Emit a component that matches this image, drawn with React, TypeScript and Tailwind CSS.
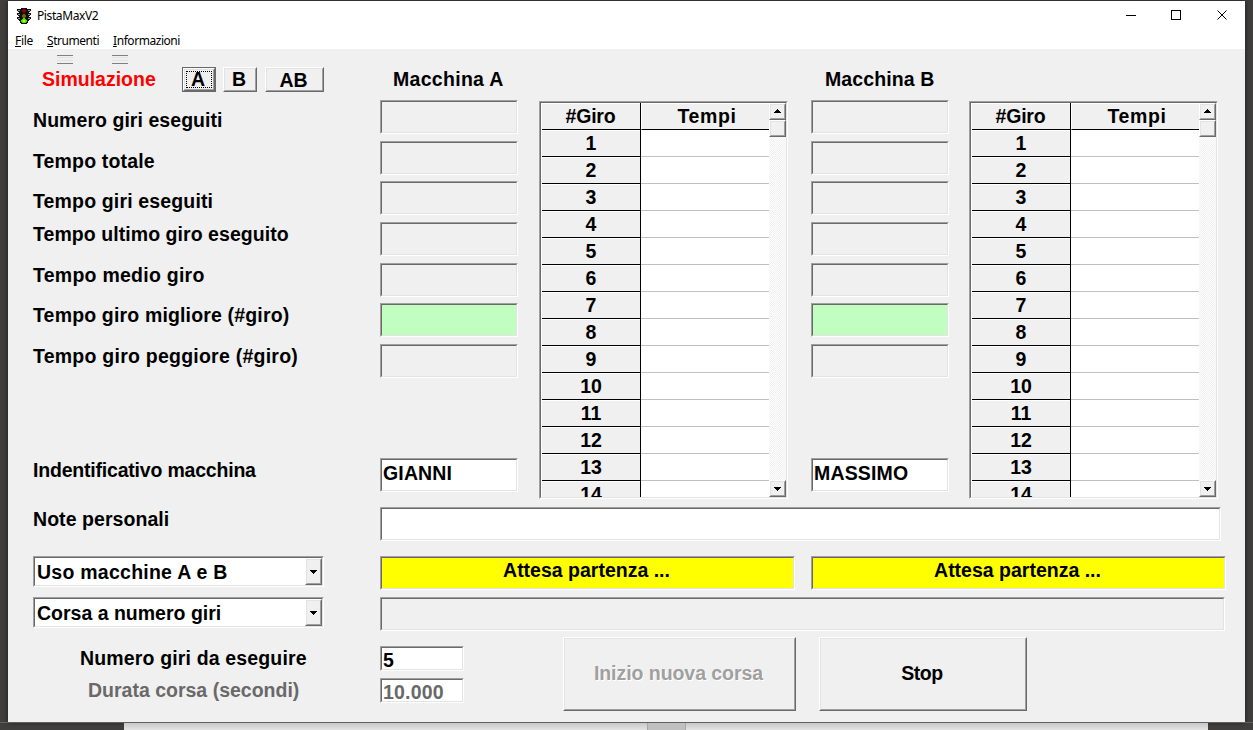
import React from "react";

const SUNKEN =
  "box-border border border-t-[#a0a0a0] border-l-[#a0a0a0] border-r-white border-b-white";
const SUNKEN_IN =
  "h-full w-full border border-t-[#696969] border-l-[#696969] border-r-[#e3e3e3] border-b-[#e3e3e3] overflow-hidden";

function Sunken({ size, fill = "", children }: { size: string; fill?: string; children?: React.ReactNode }) {
  return (
    <div className={`${SUNKEN} shrink-0 ${size}`}>
      <div className={`${SUNKEN_IN} ${fill}`}>{children}</div>
    </div>
  );
}

function Raised({ size, className = "", children }: { size: string; className?: string; children?: React.ReactNode }) {
  return (
    <div className={`shrink-0 border border-t-white border-l-white border-r-[#696969] border-b-[#696969] bg-[#f0f0f0] ${size}`}>
      <div className={`flex h-full w-full items-center justify-center border border-t-[#e3e3e3] border-l-[#e3e3e3] border-r-[#a0a0a0] border-b-[#a0a0a0] ${className}`}>
        {children}
      </div>
    </div>
  );
}

function ScrollButton({ up }: { up?: boolean }) {
  return (
    <Raised size="h-[17px] w-[17px]" className={up ? "pb-px" : ""}>
      <svg width="7" height="4" viewBox="0 0 7 4" shapeRendering="crispEdges">
        <path d={up ? "M3 0h1v1h1v1h1v1h1v1H0V3h1V2h1V1h1z" : "M0 0h7v1H6v1H5v1H4v1H3V3H2V2H1V1H0z"} />
      </svg>
    </Raised>
  );
}

function LapTable() {
  const laps = Array.from({ length: 14 }, (_, i) => i + 1);
  return (
    <Sunken size="h-[398px] w-[249px]">
      <div className="flex h-full w-full bg-white">
        <div className="w-[100px] shrink-0 border-r border-l border-r-black border-l-white bg-[#f0f0f0]">
          <div className="h-[27px] border-t border-b border-t-white border-b-black pr-px text-center leading-[25px] tracking-[-0.2px]">#Giro</div>
          {laps.map((n) => (
            <div key={n} className="h-[27px] border-t border-b border-t-white border-b-black text-center leading-[25px]">
              {n}
            </div>
          ))}
        </div>
        <div className="w-[128px] shrink-0">
          <div className="h-[27px] border-t border-b border-l border-t-white border-l-white border-b-black bg-[#f0f0f0] pl-[3px] text-center leading-[25px] tracking-[0.6px]">Tempi</div>
          {laps.map((n) => (
            <div key={n} className="h-[27px] border-b border-[#c0c0c0]" />
          ))}
        </div>
        <div className="flex w-[17px] shrink-0 flex-col bg-[repeating-conic-gradient(#f0f0f0_0_25%,#ffffff_0_50%)] bg-[length:2px_2px]">
          <ScrollButton up />
          <Raised size="h-[17px] w-[17px]" />
          <div className="flex-1" />
          <ScrollButton />
        </div>
      </div>
    </Sunken>
  );
}

function CarPanel({ title, name, titleClass, fieldsWidth }: { title: string; name: string; titleClass: string; fieldsWidth: string }) {
  const field = "h-[34px] w-[138px]";
  return (
    <div className="flex">
      <div className={`shrink-0 ${fieldsWidth}`}>
        <div className={`h-[33px] pt-px leading-[22px] whitespace-nowrap ${titleClass}`}>{title}</div>
        <div className="flex h-[358px] flex-col">
          <Sunken size={field} />
          <div className="h-[7px]" />
          <Sunken size={field} />
          <div className="h-[6px]" />
          <Sunken size={field} />
          <div className="h-[7px]" />
          <Sunken size={field} />
          <div className="h-[7px]" />
          <Sunken size={field} />
          <div className="h-[6px]" />
          <Sunken size={field} fill="bg-[#c0ffc0]" />
          <div className="h-[7px]" />
          <Sunken size={field} />
        </div>
        <Sunken size={field} fill="bg-white">
          <div className="pl-[1px] leading-[27px] tracking-[0.15px]">{name}</div>
        </Sunken>
      </div>
      <div className="pt-[34px]">
        <LapTable />
      </div>
    </div>
  );
}

function Combo({ label, spacing }: { label: string; spacing: string }) {
  return (
    <Sunken size="h-[31px] w-[291px]" fill="bg-white">
      <div className="flex h-full">
        <div className={`flex-1 pl-[2px] leading-[29px] ${spacing}`}>{label}</div>
        <Raised size="h-[27px] w-[17px]">
          <svg width="7" height="4" viewBox="0 0 7 4" shapeRendering="crispEdges">
            <path d="M0 0h7v1H6v1H5v1H4v1H3V3H2V2H1V1H0z" />
          </svg>
        </Raised>
      </div>
    </Sunken>
  );
}

function TrafficLight() {
  return (
    <svg width="16" height="16" viewBox="0 0 16 16" shapeRendering="crispEdges">
      <path d="M5 0h6v1h4v2h-1v1h-1v1h2v2h-1v1h-1v1h2v2h-1v1h-1v1h-1v2h-1v1H5v-1H4v-2H3v-1H2v-1H1V9h2V8H2V7H1V5h2V4H2V3H1V1h4z" fill="#111" />
      <path d="M2 2h2v1H2zM12 2h2v1h-2zM2 6h2v1H2zM12 6h2v1h-2zM2 10h2v1H2zM12 10h2v1h-2z" fill="#909090" />
      <path d="M7 1h2v1h1v2H9v1H7V4H6V2h1z" fill="#8b0000" />
      <path d="M7 6h2v1h1v2H9v1H7V9H6V7h1z" fill="#6b6b00" />
      <path d="M7 10h2v1h1v1h1v2h-1v1H6v-1H5v-2h1v-1h1z" fill="#39f000" />
      <path d="M7 12h2v2H7z" fill="#ffff00" />
    </svg>
  );
}

function Gripper() {
  return (
    <div className="h-[9px] w-4 border-t border-b border-[#808080] pt-px">
      <div className="h-[4px] border-t border-b border-[#e3e3e3]" />
    </div>
  );
}

const LABELS = [
  { text: "Numero giri eseguiti", h: "h-[41px]", sp: "tracking-[0.05px]" },
  { text: "Tempo totale", h: "h-[40px]", sp: "tracking-[0.15px]" },
  { text: "Tempo giri eseguiti", h: "h-[33px]", sp: "tracking-[0.15px]" },
  { text: "Tempo ultimo giro eseguito", h: "h-[41px]", sp: "tracking-[0.06px]" },
  { text: "Tempo medio giro", h: "h-[40px]", sp: "tracking-[0.25px]" },
  { text: "Tempo giro migliore (#giro)", h: "h-[41px]", sp: "tracking-[0.16px]" },
  { text: "Tempo giro peggiore (#giro)", h: "h-[114px]", sp: "tracking-[0.24px]" },
  { text: "Indentificativo macchina", h: "h-[49px]", sp: "tracking-[-0.2px]" },
  { text: "Note personali", h: "h-[30px]", sp: "tracking-[0.06px]" },
];

export default function App() {
  return (
    <div className="flex h-[730px] w-[1253px] flex-col overflow-hidden bg-[#403f3d] pt-px">
      <div className="ml-2 flex h-[721px] w-[1237px] shrink-0 flex-col bg-[#f0f0f0] shadow-[0_0_5px_rgba(0,0,0,0.6)]">
        <div className="h-[48px] shrink-0 bg-white font-['Noto_Sans',sans-serif] text-xs text-black">
          <div className="flex h-[30px] items-center pl-2">
            <TrafficLight />
            <span className="ml-[5px] tracking-[-0.4px]">PistaMaxV2</span>
            <div className="flex-1" />
            <svg width="102" height="12" viewBox="0 0 102 12" className="mr-[17px]" fill="none" stroke="#000" shapeRendering="crispEdges">
              <path d="M0 5.5h10M45.5 0.5h9v9h-9z" />
              <path d="M91.5 0.5l9 9M100.5 0.5l-9 9" shapeRendering="auto" />
            </svg>
          </div>
          <div className="flex h-[18px] gap-[14px] pl-[7px] leading-[20px]">
            <span className="tracking-[-0.3px]"><u>F</u>ile</span>
            <span className="tracking-[-0.45px]"><u>S</u>trumenti</span>
            <span className="tracking-[-0.45px]"><u>I</u>nformazioni</span>
          </div>
        </div>
        <div className="flex h-[673px] flex-col font-['Liberation_Sans',Arial,sans-serif] text-[19.5px] font-bold text-black">
          <div className="flex h-[18px] shrink-0 gap-[39px] pt-[6px] pl-[49px]">
            <Gripper />
            <Gripper />
          </div>
          <div className="flex h-[489px] shrink-0">
            <div className="w-[372px] shrink-0">
              <div className="flex h-[41px] pl-[34px]">
                <div className="w-[140px] pt-[2px] leading-[20px] text-[#ff0000]">Simulazione</div>
                <div className="h-[25px] w-[34px] border border-[#696969]">
                  <Raised size="h-full w-full" className="p-px">
                    <div className="flex h-full w-full items-center justify-center border border-dotted border-black pr-[2px]">A</div>
                  </Raised>
                </div>
                <div className="w-[7px]" />
                <Raised size="h-[25px] w-[34px]" className="pr-[2px]">B</Raised>
                <div className="w-[8px]" />
                <Raised size="h-[25px] w-[59px]" className="pt-[2px] pr-[2px]">AB</Raised>
              </div>
              <div className="pl-[25px] leading-[24px] whitespace-nowrap">
                {LABELS.map((l) => (
                  <div key={l.text} className={`${l.h} ${l.sp}`}>{l.text}</div>
                ))}
              </div>
            </div>
            <div>
              <div className="flex h-[440px]">
                <div className="w-[431px]">
                  <CarPanel title="Macchina A" name="GIANNI" titleClass="pl-[13px] tracking-[0.3px]" fieldsWidth="w-[159px]" />
                </div>
                <CarPanel title="Macchina B" name="MASSIMO" titleClass="pl-[14px] tracking-[0.1px]" fieldsWidth="w-[158px]" />
              </div>
              <Sunken size="h-[34px] w-[841px]" fill="bg-white" />
            </div>
          </div>
          <div className="flex">
            <div className="w-[347px] pl-[25px]">
              <Combo label="Uso macchine A e B" spacing="tracking-[0.25px]" />
              <div className="h-[10px]" />
              <Combo label="Corsa a numero giri" spacing="" />
              <div className="h-[18px]" />
              <div className="pl-[47px] leading-[24px] tracking-[0.15px] whitespace-nowrap">Numero giri da eseguire</div>
              <div className="mt-[8px] pl-[55px] leading-[24px] whitespace-nowrap text-[#696969]">Durata corsa (secondi)</div>
            </div>
            <div className="ml-[25px]">
              <div className="flex gap-[16px]">
                <Sunken size="h-[34px] w-[415px]" fill="bg-[#ffff00]"><div className="pr-[2px] text-center leading-[25px]">Attesa partenza ...</div></Sunken>
                <Sunken size="h-[34px] w-[415px]" fill="bg-[#ffff00]"><div className="pr-[2px] text-center leading-[25px]">Attesa partenza ...</div></Sunken>
              </div>
              <div className="mt-[7px]"><Sunken size="h-[34px] w-[845px]" /></div>
              <div className="flex pt-[6px]">
                <div className="w-[183px] pt-[9px]">
                  <Sunken size="h-[25px] w-[84px]" fill="bg-white"><div className="pl-px leading-[25px]">5</div></Sunken>
                  <div className="h-[7px]" />
                  <Sunken size="h-[25px] w-[84px]" fill="bg-white"><div className="pl-[1px] leading-[25px] tracking-[0.2px] text-[#696969]">10.000</div></Sunken>
                </div>
                <Raised size="h-[74px] w-[233px]"><span className="pr-[2px] tracking-[-0.05px] text-[#a0a0a0] [text-shadow:1px_1px_0_#fff]">Inizio nuova corsa</span></Raised>
                <div className="w-[23px]" />
                <Raised size="h-[74px] w-[208px]"><span className="pr-[2px] tracking-[-0.4px]">Stop</span></Raised>
              </div>
            </div>
          </div>
        </div>
      </div>
      <div className="flex h-2 shrink-0 border-t border-[#606060]">
        <div className="w-[124px]" />
        <div className="w-[523px] bg-linear-to-b from-[#c8c8c8] to-[#e3e3e3]" />
        <div className="w-[39px] border-x border-[#a8a8a8] bg-[#c0c0c0]" />
        <div className="w-[522px] bg-linear-to-b from-[#c8c8c8] to-[#e3e3e3]" />
      </div>
    </div>
  );
}
